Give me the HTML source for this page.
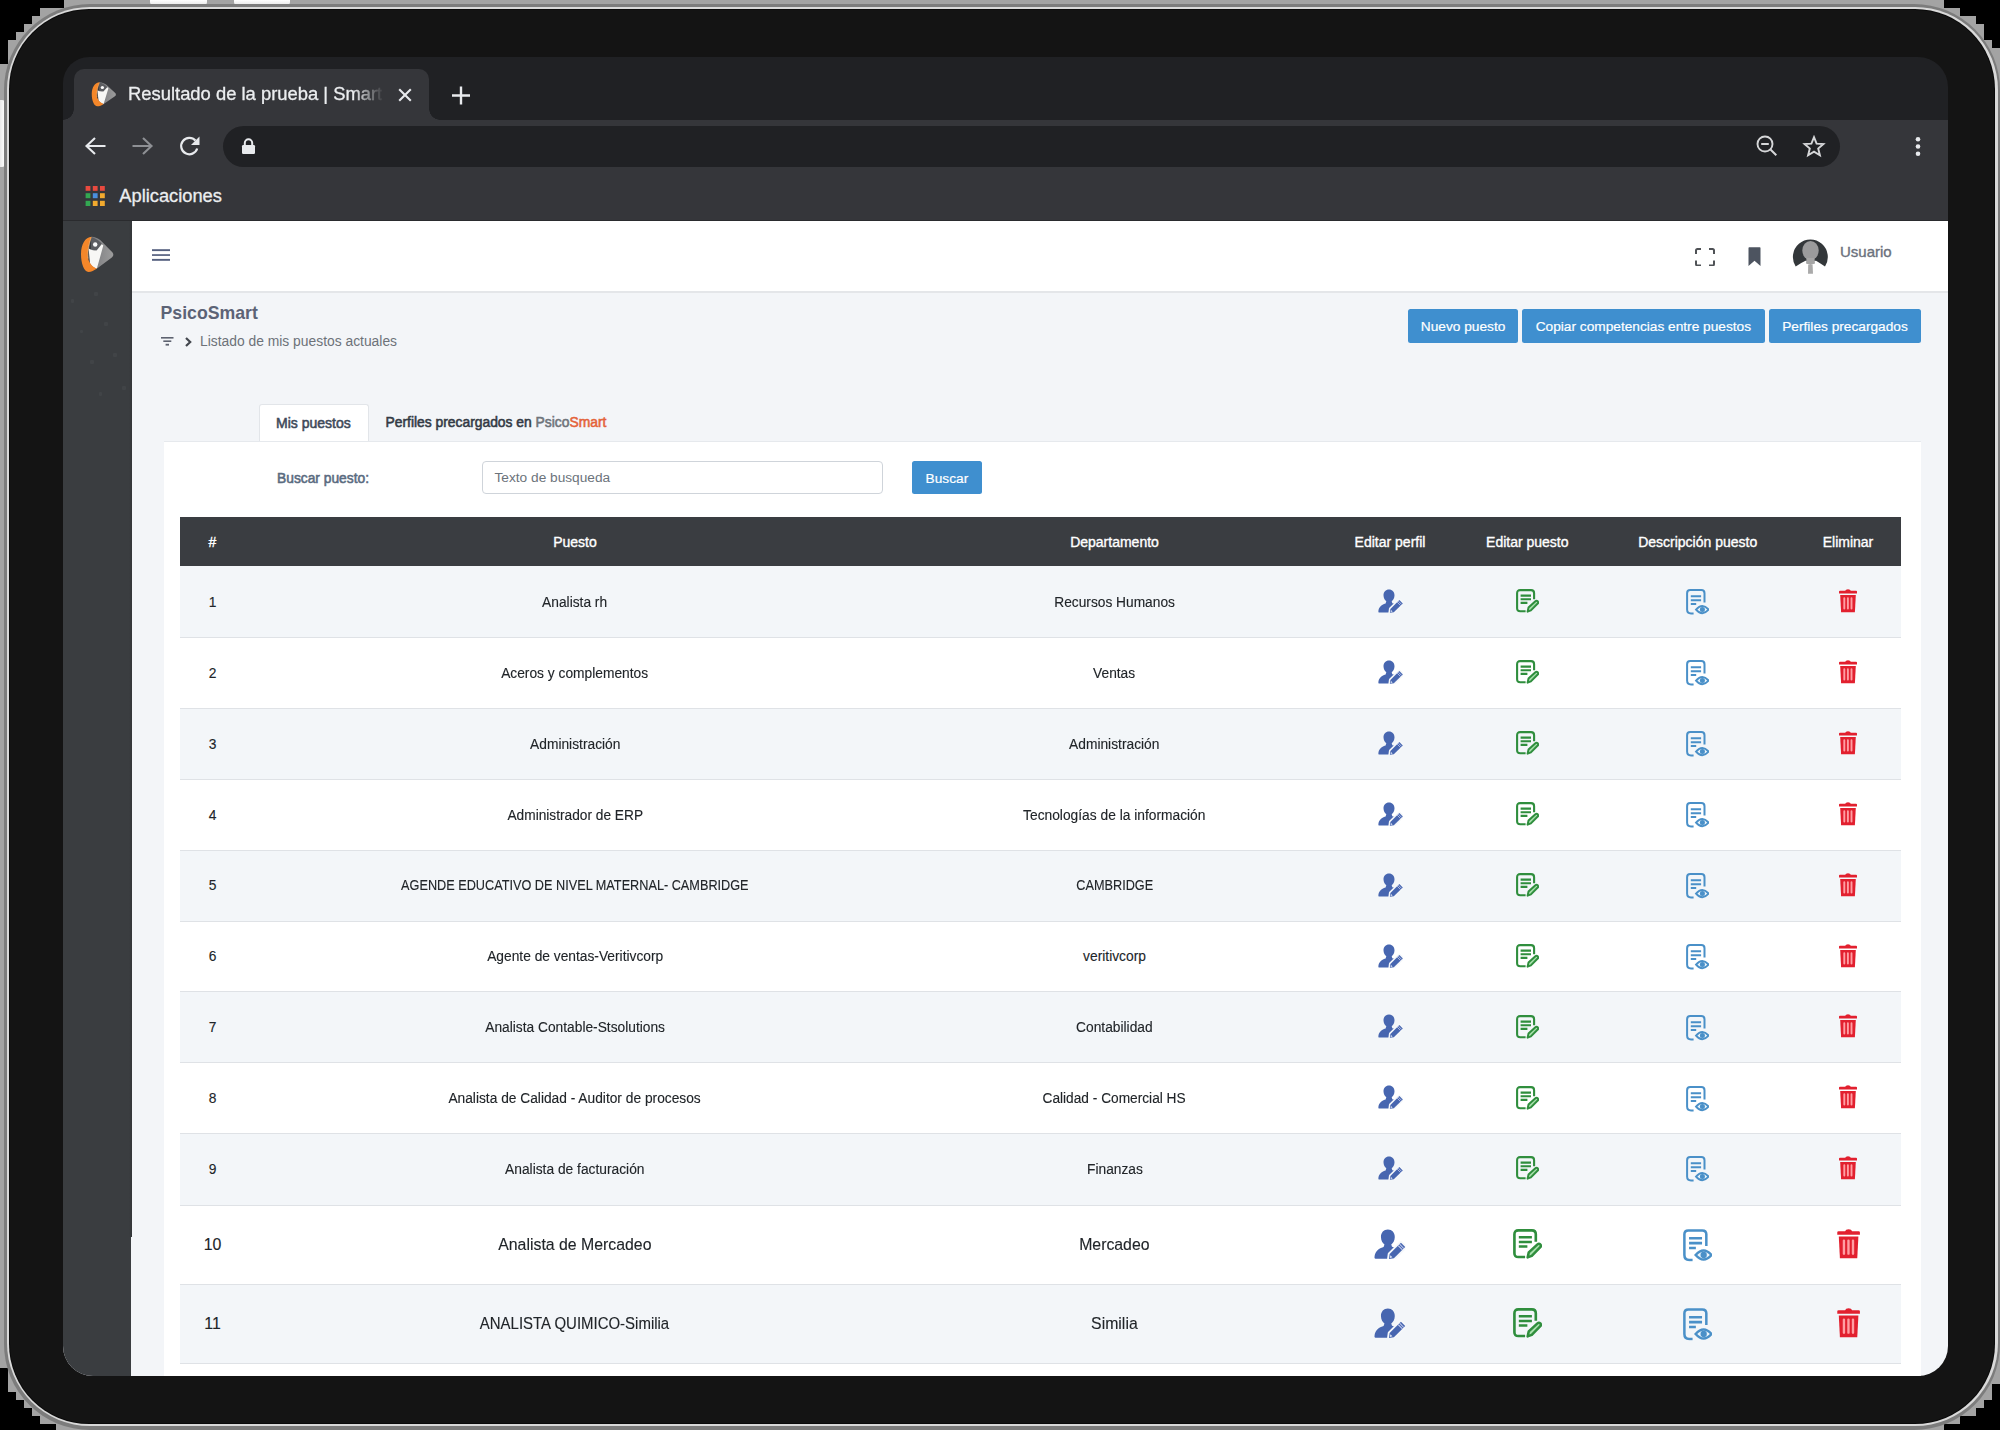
<!DOCTYPE html>
<html><head><meta charset="utf-8">
<style>
*{box-sizing:border-box;margin:0;padding:0}
html,body{width:2000px;height:1430px;overflow:hidden;background:#000;font-family:"Liberation Sans",sans-serif}
.a{position:absolute}
.t{position:absolute;white-space:nowrap;line-height:1}
.btn{background:linear-gradient(#fff,#e8e8e8);border-radius:0 0 3px 3px}
.med{-webkit-text-stroke:0.35px currentColor}
.med2{-webkit-text-stroke:0.55px currentColor}
.btnb{background:#3f8fcf;border-radius:2.5px}
.hc{width:300px;text-align:center;color:#fff}
.tc{width:600px;text-align:center;color:#212529;-webkit-text-stroke:0.12px #212529}
.tc span{display:inline-block}
</style></head><body>
<svg width="0" height="0" style="position:absolute"><defs>
<symbol id="logo" viewBox="0 0 35 39">
  <linearGradient id="lg1" x1="0" y1="0" x2="1" y2="0"><stop offset="0" stop-color="#7a7b7e"/><stop offset="1" stop-color="#9c9c9c"/></linearGradient>
  <path d="M11.8 1.8C14.5 1.9 17.5 3.3 20.5 5.3L31.3 16.3C33.9 18.4 34 20.8 31.5 22.8L18 32.8C15 35 12.5 34.5 11 33Z" fill="url(#lg1)"/>
  <path d="M11.4 2.2C14 2.4 17.5 4.3 21.8 8.6L16.8 15.6L11 14.5Z" fill="#5c5d61"/>
  <path d="M21.8 9.3L23.3 10.6L16.9 33.5C14.5 33.2 12 31.2 10 28.5L8.6 13.6C10.5 14.8 12.5 15.4 14.2 15.4L16.6 15.4Z" fill="#f7f7f5"/>
  <circle cx="15.2" cy="9.5" r="2.2" fill="#fafafa"/>
  <path d="M11.8 1.7C5 2 1 9.5 1 19C1 28.5 4 37 8.6 37C11.3 37 14.2 35.4 16.9 33.5C13 32.6 10.2 29.2 8.6 25.3C7.2 21.2 7.6 13.5 11.3 2.4Z" fill="#f4872a"/>
  <path d="M11.3 2.4C8.2 11 7.4 18 8.3 23.5" stroke="#ffd9a8" stroke-width="0.8" fill="none" opacity="0.6"/>
</symbol>
<symbol id="ue" viewBox="0 0 25 24">
  <path d="M11 0.4C14.3 0.4 16.5 2.9 16.5 6.3C16.5 9.2 15.1 11.3 13.7 12.3L14.3 14.2C17 14.8 19 16 20 17.5L15 23.6H1.2C0.4 23.6 0.3 22.9 0.4 22.1C0.8 18.3 3 15.8 7.6 14.4L8.3 12.3C6.9 11.3 5.5 9.2 5.5 6.3C5.5 2.9 7.7 0.4 11 0.4Z" fill="#4766b0"/>
  <path d="M11.9 23.8L12.4 19.9L21.4 11L24.8 14.4L15.8 23.3Z" fill="#4766b0" stroke="#f6f8fa" stroke-width="3" paint-order="stroke" stroke-linejoin="round"/>
  <path d="M20.3 12.1L23.7 15.5M19.2 13.2L22.6 16.6" stroke="#c5cdf0" stroke-width="0.8"/>
  <path d="M12.6 23L13 20.9L14.6 22.5Z" fill="#e6ecf9"/>
</symbol>
<symbol id="de" viewBox="0 0 23 24">
  <path d="M9.6 22.3H4.2Q1.1 22.3 1.1 19.2V4.2Q1.1 1.1 4.2 1.1H15Q18.1 1.1 18.1 4.2V10.2" stroke="#2f8e3d" stroke-width="2.1" fill="none"/>
  <path d="M4.6 6.6H15M4.6 10.3H15M4.6 13.9H11.4" stroke="#2f8e3d" stroke-width="2.1"/>
  <path d="M11.6 22.6L12.5 18.6L19.4 12.2Q20.6 11.2 21.7 12.3Q22.7 13.4 21.7 14.5L14.9 21.4Z" fill="#a8e0ac" stroke="#2f8e3d" stroke-width="2" stroke-linejoin="round"/>
</symbol>
<symbol id="dv" viewBox="0 0 23 26">
  <path d="M7.6 24.5H5Q1.1 24.5 1.1 20.6V4.2Q1.1 1.1 4.2 1.1H15.3Q18.5 1.1 18.5 4.2V13.4" stroke="#4a90c8" stroke-width="2" fill="none"/>
  <path d="M4.8 7.3H15.1M4.8 11.2H15.1M4.8 15H10.2" stroke="#4a90c8" stroke-width="2"/>
  <path d="M10 20.6Q16.4 13.4 22.6 20.6Q16.4 27.8 10 20.6Z" fill="#eaf4fb" stroke="#4a90c8" stroke-width="1.9"/>
  <circle cx="16.4" cy="20.6" r="2.5" fill="#4a90c8"/>
</symbol>
<symbol id="tr" viewBox="0 0 20 24">
  <path d="M1 2.6Q1 1.7 2 1.7H7.2Q7.6 0.2 10 0.2Q12.4 0.2 12.8 1.7H18Q19 1.7 19 2.6V4.6H1Z" fill="#e2202f"/>
  <path d="M2.2 6H17.8L16.9 23.3H3.1Z" fill="#e2202f"/>
  <path d="M6.3 9.2V19.6M9.9 9.2V19.6M13.5 9.2V19.6" stroke="#ff9ea3" stroke-width="1.9" stroke-linecap="round"/>
</symbol>
</defs></svg>

<div class="a" style="left:0;top:0;width:2000px;height:1430px;background:#a3a3a3"></div>
<div class="a" style="left:0px;top:0px;width:64px;height:8px;background:#000"></div>
<div class="a" style="left:0px;top:8px;width:40px;height:8px;background:#000"></div>
<div class="a" style="left:0px;top:16px;width:32px;height:8px;background:#000"></div>
<div class="a" style="left:0px;top:24px;width:24px;height:8px;background:#000"></div>
<div class="a" style="left:0px;top:32px;width:16px;height:8px;background:#000"></div>
<div class="a" style="left:0px;top:40px;width:8px;height:24px;background:#000"></div>
<div class="a" style="left:1944px;top:0px;width:56px;height:8px;background:#000"></div>
<div class="a" style="left:1960px;top:8px;width:40px;height:8px;background:#000"></div>
<div class="a" style="left:1976px;top:16px;width:24px;height:8px;background:#000"></div>
<div class="a" style="left:1984px;top:24px;width:16px;height:16px;background:#000"></div>
<div class="a" style="left:1992px;top:40px;width:8px;height:8px;background:#000"></div>
<div class="a" style="left:0px;top:1368px;width:8px;height:62px;background:#000"></div>
<div class="a" style="left:8px;top:1392px;width:8px;height:38px;background:#000"></div>
<div class="a" style="left:16px;top:1400px;width:8px;height:30px;background:#000"></div>
<div class="a" style="left:24px;top:1408px;width:8px;height:22px;background:#000"></div>
<div class="a" style="left:32px;top:1416px;width:8px;height:14px;background:#000"></div>
<div class="a" style="left:40px;top:1424px;width:16px;height:6px;background:#000"></div>
<div class="a" style="left:1992px;top:1384px;width:8px;height:46px;background:#000"></div>
<div class="a" style="left:1984px;top:1400px;width:8px;height:30px;background:#000"></div>
<div class="a" style="left:1976px;top:1408px;width:8px;height:22px;background:#000"></div>
<div class="a" style="left:1960px;top:1416px;width:16px;height:14px;background:#000"></div>
<div class="a" style="left:1944px;top:1424px;width:16px;height:6px;background:#000"></div>
<div class="a btn" style="left:150px;top:0;width:57px;height:4.5px"></div>
<div class="a btn" style="left:233.5px;top:0;width:56px;height:4.5px"></div>
<div class="a" style="left:0;top:100px;width:4.5px;height:67px;background:linear-gradient(90deg,#e8e8e8,#fff);border-radius:0 3px 3px 0"></div>
<div class="a" style="left:4px;top:4px;width:1996px;height:1426px;background:#7c7c7c;border-radius:86px"></div>
<div class="a" style="left:6.5px;top:6.5px;width:1991px;height:1419.5px;background:#d9d9d9;border-radius:83px"></div>
<div class="a" style="left:9px;top:9px;width:1986px;height:1414.5px;background:#0a0a0a;border-radius:80px"></div>
<div class="a" style="left:10px;top:10px;width:1984px;height:1413px;background:#141414;border-radius:79px"></div>
<div class="a" style="left:0;top:0;width:2000px;height:1430px;clip-path:inset(57px 52px 54px 63px round 26px 30px 30px 30px)">
<div class="a" style="left:63px;top:57px;width:1885px;height:63px;background:#202124"></div>
<div class="a" style="left:74px;top:69px;width:355px;height:51px;background:#35363a;border-radius:10px 10px 0 0"></div>
<div class="a" style="left:63px;top:109px;width:11px;height:11px;background:radial-gradient(circle at 0 0,#202124 10.5px,#35363a 11px)"></div>
<div class="a" style="left:429px;top:109px;width:11px;height:11px;background:radial-gradient(circle at 100% 0,#202124 10.5px,#35363a 11px)"></div>
<div class="a" style="left:63px;top:119.6px;width:1885px;height:101.4px;background:#35363a"></div>
<div class="a" style="left:222.5px;top:125.5px;width:1617.5px;height:41px;background:#202124;border-radius:21px"></div>
<div class="a" style="left:63px;top:219.5px;width:1885px;height:1.5px;background:#2a2b2e"></div>
<svg class="a" style="left:90.6px;top:80.6px" width="26.2" height="26.7" viewBox="0 0 35 39" preserveAspectRatio="none"><use href="#logo"/></svg>
<div class="t" style="left:128px;top:85.4px;font-size:18.4px;color:#eceef0;-webkit-text-stroke:0.3px #eceef0;width:256px;overflow:hidden;-webkit-mask-image:linear-gradient(90deg,#000 88%,transparent 100%)">Resultado de la prueba | Smart</div>
<svg class="a" style="left:397px;top:87px" width="16" height="16" viewBox="0 0 16 16"><path d="M2.2 2.2L13.8 13.8M13.8 2.2L2.2 13.8" stroke="#e8eaed" stroke-width="2.1"/></svg>
<svg class="a" style="left:450px;top:84.5px" width="22" height="21" viewBox="0 0 22 21"><path d="M11 1.5V19.5M2 10.5H20" stroke="#e8eaed" stroke-width="2.4"/></svg>
<svg class="a" style="left:84px;top:135px" width="23" height="22" viewBox="0 0 23 22"><path d="M21.5 11H3.5M11 3L2.5 11L11 19" stroke="#e8eaed" stroke-width="2.1" fill="none"/></svg>
<svg class="a" style="left:131px;top:135px" width="23" height="22" viewBox="0 0 23 22"><path d="M1.5 11H19.5M12 3L20.5 11L12 19" stroke="#8e9094" stroke-width="2.1" fill="none"/></svg>
<svg class="a" style="left:178px;top:135px" width="24" height="23" viewBox="0 0 24 23"><path d="M19.2 13.5 A8.2 8.2 0 1 1 17.5 5.6" stroke="#e8eaed" stroke-width="2.2" fill="none"/><path d="M21.5 1.5V10H13Z" fill="#e8eaed"/></svg>
<svg class="a" style="left:241px;top:138px" width="15" height="17" viewBox="0 0 15 17"><path d="M3.8 7V5A3.7 3.7 0 0 1 11.2 5V7" stroke="#e8eaed" stroke-width="2" fill="none"/><rect x="1" y="7" width="13" height="9" rx="1.3" fill="#e8eaed"/></svg>
<svg class="a" style="left:1755px;top:134px" width="24" height="24" viewBox="0 0 24 24"><circle cx="10" cy="10" r="7.5" stroke="#d5d6d8" stroke-width="1.9" fill="none"/><path d="M6.2 10H13.8M15.5 15.5L21.3 21.3" stroke="#d5d6d8" stroke-width="2"/></svg>
<svg class="a" style="left:1801.5px;top:134.5px" width="24" height="23" viewBox="0 0 24 23"><path d="M12 2.2L14.6 8.6L21.4 9.1L16.2 13.5L17.9 20.2L12 16.6L6.1 20.2L7.8 13.5L2.6 9.1L9.4 8.6Z" stroke="#d5d6d8" stroke-width="1.9" fill="none"/></svg>
<svg class="a" style="left:1914px;top:135px" width="8" height="23" viewBox="0 0 8 23"><circle cx="4" cy="4.3" r="2.3" fill="#e8eaed"/><circle cx="4" cy="11.5" r="2.3" fill="#e8eaed"/><circle cx="4" cy="18.7" r="2.3" fill="#e8eaed"/></svg>
<svg class="a" style="left:85px;top:186px" width="21" height="21" viewBox="0 0 21 21">
    <rect x="0.6" y="0" width="4.8" height="4.8" fill="#e94a3f"/><rect x="7.8" y="0" width="4.8" height="4.8" fill="#e94a3f"/><rect x="15" y="0" width="4.8" height="4.8" fill="#e94a3f"/>
    <rect x="0.6" y="7.2" width="4.8" height="5" fill="#33a852"/><rect x="7.8" y="7.2" width="4.8" height="5" fill="#4a8fde"/><rect x="15" y="7.2" width="4.8" height="5" fill="#f2aa2e"/>
    <rect x="0.6" y="14.8" width="4.8" height="5.2" fill="#33a852"/><rect x="7.8" y="14.8" width="4.8" height="5.2" fill="#f2aa2e"/><rect x="15" y="14.8" width="4.8" height="5.2" fill="#f2aa2e"/>
  </svg>
<div class="t" style="left:119.3px;top:187px;font-size:18.3px;color:#eceef0;-webkit-text-stroke:0.3px #eceef0">Aplicaciones</div>
<div class="a" style="left:63px;top:221px;width:1885px;height:1155px;background:#f3f5f8"></div>
<div class="a" style="left:63px;top:221px;width:68.8px;height:1016px;background:#3a3d40"></div>
<div class="a" style="left:63px;top:1237px;width:68px;height:139px;background:#3a3d40"></div>
<div class="a" style="left:128.5px;top:221px;width:3.5px;height:1016px;background:linear-gradient(90deg,#3a3d40,#333538)"></div>
<div class="a" style="left:94.2px;top:292.2px;width:3.6px;height:3.6px;border-radius:1px;background:#414447"></div>
<div class="a" style="left:70.8px;top:299.2px;width:3.6px;height:3.6px;border-radius:1px;background:#414447"></div>
<div class="a" style="left:104.2px;top:322.2px;width:3.6px;height:3.6px;border-radius:1px;background:#414447"></div>
<div class="a" style="left:79.9px;top:329.9px;width:3.6px;height:3.6px;border-radius:1px;background:#414447"></div>
<div class="a" style="left:113.2px;top:353.2px;width:3.6px;height:3.6px;border-radius:1px;background:#414447"></div>
<div class="a" style="left:90.2px;top:360.2px;width:3.6px;height:3.6px;border-radius:1px;background:#414447"></div>
<div class="a" style="left:98.8px;top:392.2px;width:3.6px;height:3.6px;border-radius:1px;background:#414447"></div>
<div class="a" style="left:122.2px;top:386.2px;width:3.6px;height:3.6px;border-radius:1px;background:#414447"></div>
<svg class="a" style="left:80px;top:235px" width="35" height="39" viewBox="0 0 35 39"><use href="#logo"/></svg>
<div class="a" style="left:132px;top:221px;width:1816px;height:70.5px;background:#fff"></div>
<div class="a" style="left:132px;top:291px;width:1816px;height:1.5px;background:#e4e6e9"></div>
<svg class="a" style="left:152px;top:249px" width="18" height="12" viewBox="0 0 18 12"><rect y="0.2" width="18" height="1.9" fill="#55607f"/><rect y="5.2" width="18" height="1.7" fill="#55607f"/><rect y="9.9" width="18" height="1.9" fill="#55607f"/></svg>
<svg class="a" style="left:1695px;top:247.5px" width="20" height="18.5" viewBox="0 0 20 18.5"><path d="M1 6V2.5Q1 1 2.5 1H6M14 1H17.5Q19 1 19 2.5V6M19 12.5V16Q19 17.5 17.5 17.5H14M6 17.5H2.5Q1 17.5 1 16V12.5" stroke="#4f5256" stroke-width="2" fill="none"/></svg>
<svg class="a" style="left:1747.5px;top:247px" width="13" height="19" viewBox="0 0 13 19"><path d="M0.5 1Q0.5 0.3 1.2 0.3H11.8Q12.5 0.3 12.5 1V19L6.5 13.8L0.5 19Z" fill="#4d5460"/></svg>
<svg class="a" style="left:1788px;top:234px" width="46" height="46" viewBox="0 0 46 46">
  <path d="M7.7 32.5A17.45 17.45 0 1 1 37 32.5Q32 29 28 26.7L22.5 27.5L17.5 26.7Q12.5 29 7.7 32.5Z" fill="#33373a"/>
  <ellipse cx="22.5" cy="16.5" rx="8.2" ry="9.6" fill="#9b9b9c"/>
  <path d="M18.5 24L26.5 24L27 29.5L22.5 31L18 29.5Z" fill="#a6a6a6"/>
  <path d="M20.2 30.8H24.6L25 39.8H20Z" fill="#aaaaaa"/>
</svg>
<div class="t med" style="left:1840px;top:244px;font-size:15px;color:#6b717c">Usuario</div>
<div class="t" style="left:160.5px;top:304.5px;font-size:17.7px;font-weight:bold;color:#5c6376">PsicoSmart</div>
<svg class="a" style="left:160.5px;top:337px" width="13" height="9" viewBox="0 0 13 9"><rect x="0" y="0" width="12.5" height="1.6" fill="#5d6270"/><rect x="2.3" y="3.4" width="8" height="1.6" fill="#5d6270"/><rect x="4.6" y="6.8" width="3.4" height="1.8" fill="#5d6270"/></svg>
<svg class="a" style="left:184px;top:336.5px" width="9" height="10" viewBox="0 0 9 10"><path d="M2 1L6.2 5L2 9" stroke="#43474e" stroke-width="2.2" fill="none"/></svg>
<div class="t" style="left:200px;top:334.9px;font-size:13.85px;color:#6d7279">Listado de mis puestos actuales</div>
<div class="a btnb" style="left:1408px;top:309.2px;width:110.2px;height:33.6px"><span class="t" style="left:0;width:100%;text-align:center;top:10.9px;font-size:13.7px;color:#fff;-webkit-text-stroke:0.2px #fff">Nuevo puesto</span></div>
<div class="a btnb" style="left:1522px;top:309.2px;width:242.7px;height:33.6px"><span class="t" style="left:0;width:100%;text-align:center;top:10.9px;font-size:13.7px;color:#fff;-webkit-text-stroke:0.2px #fff">Copiar competencias entre puestos</span></div>
<div class="a btnb" style="left:1769px;top:309.2px;width:152.0px;height:33.6px"><span class="t" style="left:0;width:100%;text-align:center;top:10.9px;font-size:13.7px;color:#fff;-webkit-text-stroke:0.2px #fff">Perfiles precargados</span></div>
<div class="a" style="left:164px;top:441px;width:1757px;height:940px;background:#fff"></div>
<div class="a" style="left:259px;top:404px;width:109.5px;height:38px;background:#fff;border:1px solid #e2e5e9;border-bottom:none;border-radius:3px 3px 0 0"></div>
<div class="a" style="left:164px;top:440.5px;width:1757px;height:1.2px;background:#e6e9ed"></div>
<div class="t med2" style="left:276px;top:416.3px;font-size:14px;color:#3f4a5a">Mis puestos</div>
<div class="t med2" style="left:385.5px;top:416.3px;font-size:13.85px;color:#333a45">Perfiles precargados en <span style="color:#6f747b">Psico</span><span style="color:#e4633a">Smart</span></div>
<div class="t med2" style="left:277px;top:471.7px;font-size:13.8px;color:#5a6b80">Buscar puesto:</div>
<div class="a" style="left:481.5px;top:461.4px;width:401px;height:33.1px;border:1px solid #cfd4da;border-radius:4px;background:#fff"></div>
<div class="t" style="left:494.5px;top:471.2px;font-size:13.7px;color:#6c737b">Texto de busqueda</div>
<div class="a btnb" style="left:912px;top:461.2px;width:69.8px;height:33.3px"><span class="t" style="left:0;width:100%;text-align:center;top:11px;font-size:13.7px;color:#fff;-webkit-text-stroke:0.2px #fff">Buscar</span></div>
<div class="a" style="left:180px;top:516.6px;width:1720.6px;height:49px;background:#3a3d41"></div>
<div class="t med hc" style="left:62.5px;top:535px;font-size:14px">#</div>
<div class="t med hc" style="left:425px;top:535px;font-size:14px">Puesto</div>
<div class="t med hc" style="left:964.5px;top:535px;font-size:14px">Departamento</div>
<div class="t med hc" style="left:1240px;top:535px;font-size:14px">Editar perfil</div>
<div class="t med hc" style="left:1377.3px;top:535px;font-size:14px">Editar puesto</div>
<div class="t med hc" style="left:1547.7px;top:535px;font-size:14px">Descripción puesto</div>
<div class="t med hc" style="left:1698px;top:535px;font-size:14px">Eliminar</div>
<div class="a" style="left:180px;top:565.6px;width:1720.6px;height:72.0px;background:#f3f6f9"></div>
<div class="a" style="left:180px;top:637.6px;width:1720.6px;height:70.7px;background:#fff"></div>
<div class="a" style="left:180px;top:708.3px;width:1720.6px;height:71.0px;background:#f3f6f9"></div>
<div class="a" style="left:180px;top:779.3px;width:1720.6px;height:70.9px;background:#fff"></div>
<div class="a" style="left:180px;top:850.2px;width:1720.6px;height:70.9px;background:#f3f6f9"></div>
<div class="a" style="left:180px;top:921.1px;width:1720.6px;height:70.7px;background:#fff"></div>
<div class="a" style="left:180px;top:991.8px;width:1720.6px;height:70.9px;background:#f3f6f9"></div>
<div class="a" style="left:180px;top:1062.7px;width:1720.6px;height:70.7px;background:#fff"></div>
<div class="a" style="left:180px;top:1133.4px;width:1720.6px;height:71.8px;background:#f3f6f9"></div>
<div class="a" style="left:180px;top:1205.2px;width:1720.6px;height:79.2px;background:#fff"></div>
<div class="a" style="left:180px;top:1284.4px;width:1720.6px;height:79.3px;background:#f3f6f9"></div>
<div class="a" style="left:180px;top:637px;width:1720.6px;height:1px;background:#dfe2e6"></div>
<div class="a" style="left:180px;top:708px;width:1720.6px;height:1px;background:#dfe2e6"></div>
<div class="a" style="left:180px;top:779px;width:1720.6px;height:1px;background:#dfe2e6"></div>
<div class="a" style="left:180px;top:850px;width:1720.6px;height:1px;background:#dfe2e6"></div>
<div class="a" style="left:180px;top:921px;width:1720.6px;height:1px;background:#dfe2e6"></div>
<div class="a" style="left:180px;top:991px;width:1720.6px;height:1px;background:#dfe2e6"></div>
<div class="a" style="left:180px;top:1062px;width:1720.6px;height:1px;background:#dfe2e6"></div>
<div class="a" style="left:180px;top:1133px;width:1720.6px;height:1px;background:#dfe2e6"></div>
<div class="a" style="left:180px;top:1205px;width:1720.6px;height:1px;background:#dfe2e6"></div>
<div class="a" style="left:180px;top:1284px;width:1720.6px;height:1px;background:#dfe2e6"></div>
<div class="a" style="left:180px;top:1363px;width:1720.6px;height:1px;background:#dfe2e6"></div>
<div class="t tc" style="left:-87.5px;top:595.8px;font-size:13.8px"><span>1</span></div>
<div class="t tc" style="left:275px;top:595.8px;font-size:13.8px"><span style="transform:scaleX(0.997)">Analista rh</span></div>
<div class="t tc" style="left:814.5px;top:595.8px;font-size:13.8px"><span style="transform:scaleX(0.996)">Recursos Humanos</span></div>
<svg class="a" style="left:1377.5px;top:589.0px" width="25.0" height="24.0"><use href="#ue"/></svg>
<svg class="a" style="left:1515.9px;top:589.2px" width="23.0" height="24.0"><use href="#de"/></svg>
<svg class="a" style="left:1686.3px;top:589.2px" width="23.0" height="26.0"><use href="#dv"/></svg>
<svg class="a" style="left:1838.4px;top:589.0px" width="20.0" height="24.0"><use href="#tr"/></svg>
<div class="t tc" style="left:-87.5px;top:666.7px;font-size:13.8px"><span>2</span></div>
<div class="t tc" style="left:275px;top:666.7px;font-size:13.8px"><span style="transform:scaleX(0.998)">Aceros y complementos</span></div>
<div class="t tc" style="left:814.5px;top:666.7px;font-size:13.8px"><span style="transform:scaleX(0.995)">Ventas</span></div>
<svg class="a" style="left:1377.5px;top:659.9px" width="25.0" height="24.0"><use href="#ue"/></svg>
<svg class="a" style="left:1515.9px;top:660.1px" width="23.0" height="24.0"><use href="#de"/></svg>
<svg class="a" style="left:1686.3px;top:660.1px" width="23.0" height="26.0"><use href="#dv"/></svg>
<svg class="a" style="left:1838.4px;top:659.9px" width="20.0" height="24.0"><use href="#tr"/></svg>
<div class="t tc" style="left:-87.5px;top:737.6px;font-size:13.8px"><span>3</span></div>
<div class="t tc" style="left:275px;top:737.6px;font-size:13.8px"><span style="transform:scaleX(0.998)">Administración</span></div>
<div class="t tc" style="left:814.5px;top:737.6px;font-size:13.8px"><span style="transform:scaleX(0.998)">Administración</span></div>
<svg class="a" style="left:1377.5px;top:730.8px" width="25.0" height="24.0"><use href="#ue"/></svg>
<svg class="a" style="left:1515.9px;top:731.0px" width="23.0" height="24.0"><use href="#de"/></svg>
<svg class="a" style="left:1686.3px;top:731.0px" width="23.0" height="26.0"><use href="#dv"/></svg>
<svg class="a" style="left:1838.4px;top:730.8px" width="20.0" height="24.0"><use href="#tr"/></svg>
<div class="t tc" style="left:-87.5px;top:808.5px;font-size:13.8px"><span>4</span></div>
<div class="t tc" style="left:275px;top:808.5px;font-size:13.8px"><span style="transform:scaleX(0.993)">Administrador de ERP</span></div>
<div class="t tc" style="left:814.5px;top:808.5px;font-size:13.8px"><span style="transform:scaleX(0.999)">Tecnologías de la información</span></div>
<svg class="a" style="left:1377.5px;top:801.7px" width="25.0" height="24.0"><use href="#ue"/></svg>
<svg class="a" style="left:1515.9px;top:801.9px" width="23.0" height="24.0"><use href="#de"/></svg>
<svg class="a" style="left:1686.3px;top:801.9px" width="23.0" height="26.0"><use href="#dv"/></svg>
<svg class="a" style="left:1838.4px;top:801.7px" width="20.0" height="24.0"><use href="#tr"/></svg>
<div class="t tc" style="left:-87.5px;top:879.4px;font-size:13.8px"><span>5</span></div>
<div class="t tc" style="left:275px;top:879.4px;font-size:13.8px"><span style="transform:scaleX(0.920)">AGENDE EDUCATIVO DE NIVEL MATERNAL- CAMBRIDGE</span></div>
<div class="t tc" style="left:814.5px;top:879.4px;font-size:13.8px"><span style="transform:scaleX(0.920)">CAMBRIDGE</span></div>
<svg class="a" style="left:1377.5px;top:872.6px" width="25.0" height="24.0"><use href="#ue"/></svg>
<svg class="a" style="left:1515.9px;top:872.8px" width="23.0" height="24.0"><use href="#de"/></svg>
<svg class="a" style="left:1686.3px;top:872.8px" width="23.0" height="26.0"><use href="#dv"/></svg>
<svg class="a" style="left:1838.4px;top:872.6px" width="20.0" height="24.0"><use href="#tr"/></svg>
<div class="t tc" style="left:-87.5px;top:950.3px;font-size:13.8px"><span>6</span></div>
<div class="t tc" style="left:275px;top:950.3px;font-size:13.8px"><span style="transform:scaleX(0.998)">Agente de ventas-Veritivcorp</span></div>
<div class="t tc" style="left:814.5px;top:950.3px;font-size:13.8px"><span>veritivcorp</span></div>
<svg class="a" style="left:1377.5px;top:943.5px" width="25.0" height="24.0"><use href="#ue"/></svg>
<svg class="a" style="left:1515.9px;top:943.7px" width="23.0" height="24.0"><use href="#de"/></svg>
<svg class="a" style="left:1686.3px;top:943.7px" width="23.0" height="26.0"><use href="#dv"/></svg>
<svg class="a" style="left:1838.4px;top:943.5px" width="20.0" height="24.0"><use href="#tr"/></svg>
<div class="t tc" style="left:-87.5px;top:1021.2px;font-size:13.8px"><span>7</span></div>
<div class="t tc" style="left:275px;top:1021.2px;font-size:13.8px"><span style="transform:scaleX(0.997)">Analista Contable-Stsolutions</span></div>
<div class="t tc" style="left:814.5px;top:1021.2px;font-size:13.8px"><span style="transform:scaleX(0.998)">Contabilidad</span></div>
<svg class="a" style="left:1377.5px;top:1014.4px" width="25.0" height="24.0"><use href="#ue"/></svg>
<svg class="a" style="left:1515.9px;top:1014.6px" width="23.0" height="24.0"><use href="#de"/></svg>
<svg class="a" style="left:1686.3px;top:1014.6px" width="23.0" height="26.0"><use href="#dv"/></svg>
<svg class="a" style="left:1838.4px;top:1014.4px" width="20.0" height="24.0"><use href="#tr"/></svg>
<div class="t tc" style="left:-87.5px;top:1092.1px;font-size:13.8px"><span>8</span></div>
<div class="t tc" style="left:275px;top:1092.1px;font-size:13.8px"><span style="transform:scaleX(0.997)">Analista de Calidad - Auditor de procesos</span></div>
<div class="t tc" style="left:814.5px;top:1092.1px;font-size:13.8px"><span style="transform:scaleX(0.993)">Calidad - Comercial HS</span></div>
<svg class="a" style="left:1377.5px;top:1085.3px" width="25.0" height="24.0"><use href="#ue"/></svg>
<svg class="a" style="left:1515.9px;top:1085.5px" width="23.0" height="24.0"><use href="#de"/></svg>
<svg class="a" style="left:1686.3px;top:1085.5px" width="23.0" height="26.0"><use href="#dv"/></svg>
<svg class="a" style="left:1838.4px;top:1085.3px" width="20.0" height="24.0"><use href="#tr"/></svg>
<div class="t tc" style="left:-87.5px;top:1163.0px;font-size:13.8px"><span>9</span></div>
<div class="t tc" style="left:275px;top:1163.0px;font-size:13.8px"><span style="transform:scaleX(0.999)">Analista de facturación</span></div>
<div class="t tc" style="left:814.5px;top:1163.0px;font-size:13.8px"><span style="transform:scaleX(0.996)">Finanzas</span></div>
<svg class="a" style="left:1377.5px;top:1156.2px" width="25.0" height="24.0"><use href="#ue"/></svg>
<svg class="a" style="left:1515.9px;top:1156.4px" width="23.0" height="24.0"><use href="#de"/></svg>
<svg class="a" style="left:1686.3px;top:1156.4px" width="23.0" height="26.0"><use href="#dv"/></svg>
<svg class="a" style="left:1838.4px;top:1156.2px" width="20.0" height="24.0"><use href="#tr"/></svg>
<div class="t tc" style="left:-87.5px;top:1237.1px;font-size:15.9px"><span>10</span></div>
<div class="t tc" style="left:275px;top:1237.1px;font-size:15.9px"><span style="transform:scaleX(0.997)">Analista de Mercadeo</span></div>
<div class="t tc" style="left:814.5px;top:1237.1px;font-size:15.9px"><span style="transform:scaleX(0.996)">Mercadeo</span></div>
<svg class="a" style="left:1374.2px;top:1229.2px" width="31.5" height="30.2"><use href="#ue"/></svg>
<svg class="a" style="left:1512.9px;top:1229.4px" width="29.0" height="30.2"><use href="#de"/></svg>
<svg class="a" style="left:1683.3px;top:1229.4px" width="29.0" height="32.8"><use href="#dv"/></svg>
<svg class="a" style="left:1835.8px;top:1229.2px" width="25.2" height="30.2"><use href="#tr"/></svg>
<div class="t tc" style="left:-87.5px;top:1316.4px;font-size:15.9px"><span>11</span></div>
<div class="t tc" style="left:275px;top:1316.4px;font-size:15.9px"><span style="transform:scaleX(0.942)">ANALISTA QUIMICO-Similia</span></div>
<div class="t tc" style="left:814.5px;top:1316.4px;font-size:15.9px"><span style="transform:scaleX(0.996)">Similia</span></div>
<svg class="a" style="left:1374.2px;top:1307.9px" width="31.5" height="30.2"><use href="#ue"/></svg>
<svg class="a" style="left:1512.9px;top:1308.1px" width="29.0" height="30.2"><use href="#de"/></svg>
<svg class="a" style="left:1683.3px;top:1308.1px" width="29.0" height="32.8"><use href="#dv"/></svg>
<svg class="a" style="left:1835.8px;top:1307.9px" width="25.2" height="30.2"><use href="#tr"/></svg>
</div>
</body></html>
